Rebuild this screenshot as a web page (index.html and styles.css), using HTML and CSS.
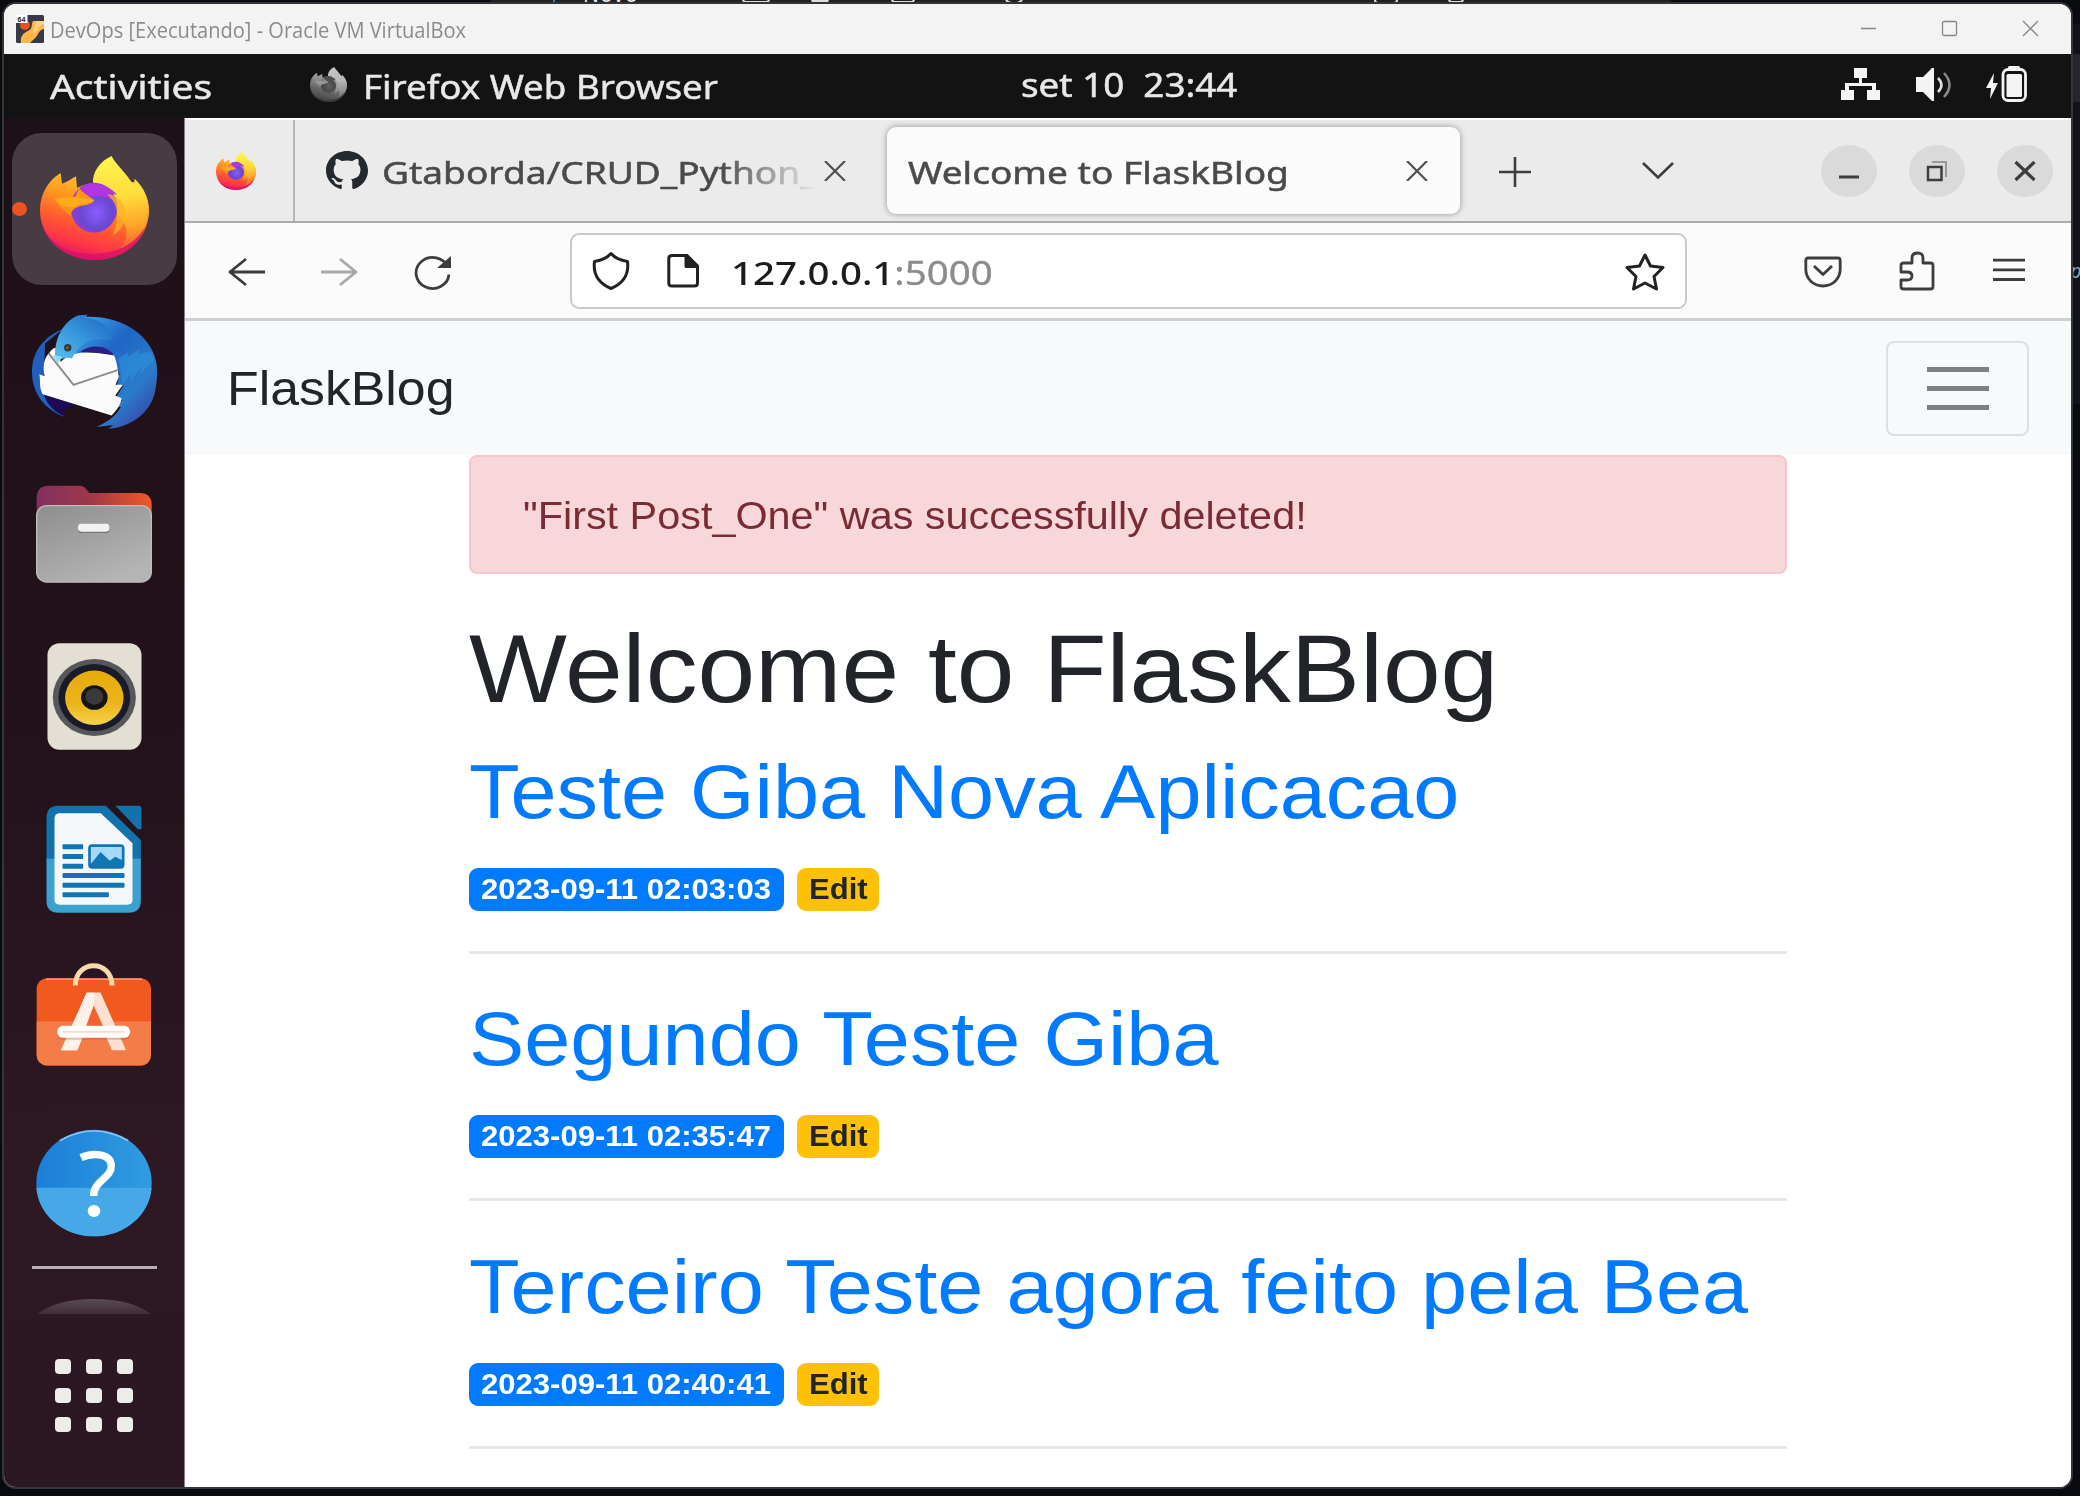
FILE: index.html
```html
<!DOCTYPE html>
<html lang="pt-BR">
<head>
<meta charset="utf-8">
<title>DevOps [Executando] - Oracle VM VirtualBox</title>
<link rel="stylesheet" href="styles.css">
</head>
<body>
<svg class="defs" width="0" height="0">
  <defs>
    <linearGradient id="fxBody" x1=".7" y1="0" x2=".35" y2="1"><stop offset="0" stop-color="#ffd738"/><stop offset=".35" stop-color="#ff9a1f"/><stop offset=".62" stop-color="#ff5a30"/><stop offset=".82" stop-color="#ff3647"/><stop offset="1" stop-color="#e0106f"/></linearGradient>
    <linearGradient id="fxFlame" x1=".4" y1="0" x2=".5" y2="1"><stop offset="0" stop-color="#fff44f"/><stop offset=".45" stop-color="#ffdc3a"/><stop offset=".8" stop-color="#ff9f28"/><stop offset="1" stop-color="#ff5f38"/></linearGradient>
    <radialGradient id="fxGlobe" cx=".55" cy=".6" r=".6"><stop offset="0" stop-color="#8a5cff"/><stop offset=".55" stop-color="#6a48d0"/><stop offset="1" stop-color="#9c35dc"/></radialGradient>
    <linearGradient id="tb" x1=".1" y1="0" x2=".9" y2="1"><stop offset="0" stop-color="#3fa4e6"/><stop offset=".35" stop-color="#1f66c6"/><stop offset=".7" stop-color="#2a7cca"/><stop offset="1" stop-color="#3d3aa0"/></linearGradient>
    <linearGradient id="tbHead" x1="0" y1="1" x2="1" y2="0"><stop offset="0" stop-color="#5cc0ee"/><stop offset=".5" stop-color="#3595da"/><stop offset="1" stop-color="#1f62c4"/></linearGradient>
    <linearGradient id="folder"><stop offset="0" stop-color="#83305f"/><stop offset=".45" stop-color="#9d374a"/><stop offset="1" stop-color="#ef5a24"/></linearGradient>
    <linearGradient id="drawer" x1="0" y1="0" x2=".6" y2="1"><stop offset="0" stop-color="#8e8e8e"/><stop offset="1" stop-color="#b4b4b4"/></linearGradient>
    <linearGradient id="cone" x1="0" y1="0" x2="0" y2="1"><stop offset="0" stop-color="#e6ac0c"/><stop offset=".6" stop-color="#eab41a"/><stop offset="1" stop-color="#f7d34c"/></linearGradient>
    <linearGradient id="help"><stop offset="0" stop-color="#1c7fd8"/><stop offset="1" stop-color="#2f9ce0"/></linearGradient>
    <linearGradient id="arc" x1="0" y1="0" x2="0" y2="1"><stop offset="0" stop-color="#5a4a53"/><stop offset="1" stop-color="#3e2d36"/></linearGradient>
    <symbol id="firefox" viewBox="120 137 327 312" preserveAspectRatio="none">
      <path fill="url(#fxBody)" d="M182 188L186 220C200 216 214 206 228 198L231 232C250 226 265 218 285 218L400 215C432 235 447 265 447 300C447 385 375 449 283 449C190 449 120 380 120 300C120 250 145 210 182 188Z"/>
      <path fill="url(#fxFlame)" d="M335 137C345 160 378 186 402 226L404 205C432 232 447 262 446 305C440 360 410 400 360 415C390 385 385 345 352 310C345 270 320 240 279 222C276 185 300 152 335 137Z"/>
      <path fill="#d90f6c" opacity=".75" d="M128 350C165 420 230 432 285 430C350 428 400 405 436 350C415 415 355 449 283 449C210 449 150 410 128 350Z"/>
      <ellipse cx="282" cy="292" rx="70" ry="75" fill="url(#fxGlobe)"/>
      <path fill="#b235e2" d="M245 230C275 212 325 220 352 254C335 246 325 250 322 252C330 258 335 264 338 270C310 250 280 262 250 258Z"/>
      <path fill="#ff9416" d="M163 266C190 260 210 264 226 258L238 232C252 254 278 262 283 270C275 286 245 284 228 292C215 300 212 308 213 320C196 300 175 288 163 266Z"/>
      <path fill="#ffae1c" opacity=".9" d="M163 266C190 258 240 262 283 270C265 282 240 280 222 290C200 292 180 285 163 266Z"/>
      <path fill="#ffb324" opacity=".75" d="M322 252C350 250 378 280 376 315C374 345 360 362 338 376C352 345 360 300 338 270Z"/>
    </symbol>
  </defs>
</svg>

<div class="behind"><i class="line"></i><span class="novo">Novo</span><i class="g1"></i><i class="g2"></i><i class="g3"></i><i class="g4"></i><i class="g5"></i><i class="g6"></i></div>
<div class="behind-right"><i></i><span>p</span></div>

<div class="window">
  <header class="titlebar">
    <svg class="vb-icon" viewBox="0 0 28 28"><rect width="28" height="28" rx="1.500" fill="#343a48"/><path fill="#ffb547" d="M17 6H28V14C22 15 23 20 19 23L14 28H5C4 22 7 18 12 16C17 14 15 9 17 6Z"/><path fill="#ffd28a" d="M20 6H28V9C20 11 22 17 18 19C16 16 20 12 20 6Z"/><circle cx="9" cy="10" r="5" fill="#e8501c"/><rect width="11.500" height="8" fill="#fff"/><text x="1.500" y="7" class="vb-bits">64</text></svg>
    <div class="win-title"><span class="fit">DevOps [Executando] - Oracle VM VirtualBox</span></div>
    <svg class="win-controls" viewBox="0 0 180 22" fill="none" stroke="#858585" stroke-width="1.300"><path d="M1 11.500H16"/><rect x="82.500" y="4.500" width="14" height="14" rx="1.500"/><path d="M163 4L178 19M178 4L163 19"/></svg>
  </header>

  <div class="panel">
    <div class="activities"><span class="fit">Activities</span></div>
    <svg class="panel-fx"><use href="#firefox"/></svg>
    <div class="appname"><span class="fit">Firefox Web Browser</span></div>
    <div class="clock"><span class="fit">set 10&nbsp; 23:44</span></div>
    <svg class="tray" viewBox="1840 64 190 40" fill="#f4f4f4">
      <path d="M1854 68h13v10h-5v5h14v7h4v10h-13v-10h5v-4h-23v4h5v10h-13v-10h4v-7h14v-5h-5z"/>
      <path d="M1916 77h7l9-9h2v33h-2l-9-9h-7z"/>
      <path d="M1938 78q7 7 0 14" fill="none" stroke="#e0e0e0" stroke-width="2.500"/><path d="M1944 73q11 12 0 24" fill="none" stroke="#8a8a8a" stroke-width="2.500"/>
      <path d="M1994 73L1986 88H1991L1990 99L1998 83H1993Z"/>
      <rect x="2003" y="69.500" width="22.500" height="31" rx="5" fill="none" stroke="#f4f4f4" stroke-width="2.800"/><rect x="2008" y="66" width="12" height="4" rx="1.500"/><rect x="2006.500" y="74" width="15.500" height="23" rx="1.500"/>
    </svg>
  </div>

  <div class="desktop">
    <nav class="dock">
      <div class="tile active"><i class="running"></i><svg class="ic-fx"><use href="#firefox"/></svg></div>
      <svg class="ic-tb" viewBox="96 612 374 344">
        <path fill="#1f5fbe" d="M190 655C130 680 96 725 96 785C96 850 135 900 195 920C160 890 140 870 130 850L135 700Z"/>
        <path fill="#1c0a52" d="M130 845L240 880C200 890 185 900 195 918C160 905 135 875 130 845Z"/>
        <path fill="url(#tb)" d="M240 622C330 612 420 650 455 720C475 760 473 800 465 840C455 900 400 950 325 955L340 944L288 950C320 935 345 920 362 890L350 890L366 870L348 860L370 825L350 825L358 790C345 770 350 755 342 738C300 715 250 720 215 745Z"/>
        <path fill="#2a1e86" d="M240 726C270 700 325 705 342 738C310 728 270 726 240 726Z"/>
        <path fill="#fbfbfb" d="M148 728C160 712 170 706 175 730L182 755C215 722 260 722 342 736C350 755 352 775 356 800L346 824L368 824L345 856L364 864C362 885 345 905 334 916L128 852C116 830 122 812 118 792L134 798C126 765 135 740 148 728Z"/>
        <path fill="none" stroke="#8d8d8d" stroke-width="6" d="M146 730L220 824L352 780"/>
        <path fill="url(#tbHead)" d="M166 744C160 690 190 632 235 616L262 614L256 624C300 626 330 650 335 690C280 680 245 690 215 745C200 740 185 745 172 754Z"/>
        <path fill="#8edcf0" d="M158 736L186 738C182 746 178 752 173 760Z"/>
        <circle cx="203" cy="713" r="11" fill="#33383a"/><circle cx="202" cy="713" r="4" fill="#8a6a2c"/>
        <path fill="#2f96dc" opacity=".55" d="M356 744L384 726L382 740L420 716L415 730L452 725L462 750L420 790L424 770L390 815L392 790L366 824Z"/>
      </svg>
      <svg class="ic-files" viewBox="110 104 348 294">
        <path fill="url(#folder)" d="M112 200V140Q114 106 148 106H240Q254 106 262 118L270 128H425Q457 130 457 162V220H112Z"/>
        <rect x="112" y="166" width="344" height="229" rx="30" fill="url(#drawer)" stroke="#bdbdbd" stroke-width="4"/>
        <rect x="236" y="224" width="94" height="24" rx="10" fill="#777"/><rect x="236" y="220" width="94" height="24" rx="10" fill="#f2f2f2"/>
      </svg>
      <svg class="ic-music" viewBox="141 577 285 322">
        <rect x="142" y="578" width="283" height="320" rx="36" fill="#e3dfd4"/><ellipse cx="283" cy="741" rx="125" ry="116" fill="#55575a"/><ellipse cx="283" cy="741" rx="108" ry="101" fill="#1b1a28"/><ellipse cx="283" cy="742" rx="88" ry="82" fill="url(#cone)"/><ellipse cx="283" cy="741" rx="40" ry="37" fill="#141414"/><ellipse cx="283" cy="738" rx="27" ry="25" fill="#3a3a3a"/>
      </svg>
      <svg class="ic-writer" viewBox="141 73 287 324">
        <path fill="#1272ab" d="M178 75H320L425 178V236H142V112Q142 75 178 75Z"/><path fill="#3ba2cf" d="M142 234H425V360Q425 396 388 396H178Q142 396 142 360Z"/>
        <path fill="#1272ab" d="M349 75H420Q427 76 427 84V146H416Z"/>
        <path fill="#f6f7f8" d="M182 98H305L400 188V358Q400 372 384 372H182Q166 372 166 358V114Q166 98 182 98Z"/>
        <g fill="#0f76b6"><rect x="190" y="191" width="62" height="15" rx="3"/><rect x="190" y="220" width="62" height="15" rx="3"/><rect x="190" y="249" width="62" height="15" rx="3"/><rect x="190" y="277" width="186" height="15" rx="3"/><rect x="190" y="306" width="186" height="15" rx="3"/><rect x="190" y="335" width="139" height="15" rx="3"/><rect x="267" y="191" width="109" height="73" rx="12"/></g>
        <path fill="#a6d8fb" d="M275 199H368V238L348 228L332 240L304 214L275 250Z"/>
      </svg>
      <svg class="ic-store" viewBox="110 547 348 308">
        <rect x="112" y="592" width="343" height="262" rx="32" fill="#f2591f"/><path fill="#f47c48" d="M112 722H455V822Q453 854 423 854H144Q112 852 112 822Z"/><path d="M140 595H428" stroke="#f98f68" stroke-width="5"/>
        <path fill="none" stroke="#f8d9a8" stroke-width="15" d="M228 614C228 535 338 535 338 614"/>
        <path fill="#fff1e8" d="M262 636H304L234 808H185Z"/><path fill="#fde0d2" d="M262 636H304L380 808H338Z"/><path fill="#f2622a" d="M283 674L312 738H252Z"/><path fill="#fff1e8" d="M262 636H286L283 674L234 808H185Z"/><rect x="174" y="740" width="218" height="37" rx="17" fill="#c9512c" opacity=".35"/><rect x="174" y="735" width="218" height="36" rx="17" fill="#fff"/><path d="M190 753H376" stroke="#fbd9cc" stroke-width="5"/>
      </svg>
      <svg class="ic-help" viewBox="109 57 348 324">
        <ellipse cx="283" cy="219" rx="173" ry="160" fill="url(#help)"/><path fill="#47a8e8" d="M110 233H456C450 315 375 379 283 379C191 379 116 315 110 233Z"/><path d="M180 92Q283 34 386 92" fill="none" stroke="#8cc6f2" stroke-width="5"/>
        <path d="M244 143C275 128 333 128 335 167C336 205 282 210 282 258" fill="none" stroke="#fff" stroke-width="22"/><ellipse cx="283" cy="303" rx="19" ry="18" fill="#fff"/>
      </svg>
      <i class="dock-line"></i>
      <svg class="ic-arc" viewBox="0 0 114 16"><path fill="url(#arc)" d="M0 16Q20 1 57 1T114 16Z"/></svg>
      <div class="apps"><i></i><i></i><i></i><i></i><i></i><i></i><i></i><i></i><i></i></div>
    </nav>

    <main class="browser">
      <div class="tabs">
        <div class="pinned"><svg class="tab-fx"><use href="#firefox"/></svg></div>
        <div class="tab">
          <svg class="gh" viewBox="0 0 16 16" preserveAspectRatio="none"><path fill="#24292f" d="M8 0C3.580 0 0 3.580 0 8c0 3.540 2.290 6.530 5.470 7.590.4.070.55-.17.55-.38 0-.19-.01-.82-.01-1.490-2.010.37-2.530-.49-2.690-.94-.09-.23-.48-.94-.82-1.130-.28-.15-.68-.52-.01-.53.63-.01 1.080.58 1.230.82.72 1.210 1.870.87 2.330.66.07-.52.28-.87.51-1.070-1.780-.2-3.640-.89-3.640-3.950 0-.87.31-1.590.82-2.150-.08-.2-.36-1.020.08-2.120 0 0 .67-.21 2.200.82.64-.18 1.320-.27 2-.27s1.360.09 2 .27c1.530-1.040 2.200-.82 2.200-.82.44 1.100.16 1.920.08 2.120.51.56.82 1.270.82 2.150 0 3.070-1.870 3.750-3.650 3.950.29.25.54.73.54 1.480 0 1.070-.01 1.930-.01 2.200 0 .21.15.46.55.38A8.010 8.010 0 0 0 16 8c0-4.420-3.580-8-8-8z"/></svg>
          <div class="tab-title fade"><span class="fit">Gtaborda/CRUD_Python_</span></div>
          <svg class="x" viewBox="0 0 22 20"><path d="M1 0L21 20M21 0L1 20"/></svg>
        </div>
        <div class="tab current">
          <div class="tab-title"><span class="fit">Welcome to FlaskBlog</span></div>
          <svg class="x" viewBox="0 0 22 20"><path d="M1 0L21 20M21 0L1 20"/></svg>
        </div>
        <svg class="plus" viewBox="0 0 32 30"><path d="M0 15H32M16 0V30"/></svg>
        <svg class="chev" viewBox="0 0 34 20"><path d="M2 2L17 16.500L32 2"/></svg>
        <div class="wm"><svg viewBox="0 0 56 52"><path d="M18 32H38" stroke="#3d3d3d" stroke-width="3"/></svg></div>
        <div class="wm"><svg viewBox="0 0 56 52" fill="none"><path d="M23 17H37V32" stroke="#999" stroke-width="2"/><rect x="19" y="22" width="13.500" height="13" stroke="#3d3d3d" stroke-width="2.500"/></svg></div>
        <div class="wm"><svg viewBox="0 0 56 52"><path d="M18.500 17L37.500 35M37.500 17L18.500 35" stroke="#3d3d3d" stroke-width="3.200"/></svg></div>
      </div>

      <div class="toolbar">
        <svg class="ico back" viewBox="0 0 37 30"><path d="M1 15H37M18 2L2 15L18 28"/></svg>
        <svg class="ico fwd" viewBox="0 0 37 30"><path d="M0 15H36M19 2L35 15L19 28"/></svg>
        <svg class="ico reload" viewBox="0 0 40 36"><path d="M35 12.500A16.500 15.500 0 1 0 36 19.500"/><path d="M38 1V13H24Z" fill="#3d3d3d" stroke="none"/></svg>
        <div class="urlbar">
          <svg class="ico shield" viewBox="0 0 40 40"><path d="M20 2.500C24 7 30 9.500 36.500 10.500C38 22 33 32 20 37.500C7 32 2 22 3.500 10.500C10 9.500 16 7 20 2.500Z"/></svg>
          <svg class="ico page" viewBox="0 0 32 34"><path d="M5 1.500H20L30.500 12V29Q30.500 32 27.500 32H5Q1.800 32 1.800 29V4.500Q1.800 1.500 5 1.500Z"/><path d="M19 1L31 12.500H19Z" fill="#222"/></svg>
          <div class="url"><span class="fit">127.0.0.1<em>:5000</em></span></div>
          <svg class="ico star" viewBox="0 0 42 40"><path d="M21 3L26.500 14L39 15.500L30 24.500L32.500 37L21 31L9.500 37L12 24.500L3 15.500L15.500 14Z"/></svg>
        </div>
        <svg class="ico pocket" viewBox="0 0 38 32"><path d="M4 2H34Q36.200 2 36.200 4.500V13C36.200 23 28.500 30 19 30S1.800 23 1.800 13V4.500Q1.800 2 4 2Z"/><path d="M10 10L19 18.500L28 10"/></svg>
        <svg class="ico puzzle" viewBox="0 0 36 40"><path d="M2 14V21H8Q13 21 13 25T8 29H2V35.500Q2 38 4.500 38H31.500Q34 38 34 35.500V14.500Q34 12 31.500 12H24V7Q24 2 18.500 2T13 7V12H4.500Q2 12 2 14Z"/></svg>
        <svg class="ico menu" viewBox="0 0 32 24"><path d="M0 2.200H32M0 11.800H32M0 21.500H32"/></svg>
      </div>

      <div class="page-body">
        <div class="navbar">
          <div class="brand"><span class="fit">FlaskBlog</span></div>
          <div class="toggler"><i></i><i></i><i></i></div>
        </div>
        <div class="container">
          <div class="alert"><span class="fit">"First Post_One" was successfully deleted!</span></div>
          <h1><span class="fit">Welcome to FlaskBlog</span></h1>
          <article><h2><span class="fit">Teste Giba Nova Aplicacao</span></h2><div class="meta"><div class="badge date"><span class="fit">2023-09-11 02:03:03</span></div><div class="badge edit"><span class="fit">Edit</span></div></div></article>
          <article><h2><span class="fit">Segundo Teste Giba</span></h2><div class="meta"><div class="badge date"><span class="fit">2023-09-11 02:35:47</span></div><div class="badge edit"><span class="fit">Edit</span></div></div></article>
          <article><h2><span class="fit">Terceiro Teste agora feito pela Bea</span></h2><div class="meta"><div class="badge date"><span class="fit">2023-09-11 02:40:41</span></div><div class="badge edit"><span class="fit">Edit</span></div></div></article>
        </div>
      </div>
    </main>
  </div>
</div>
</body>
</html>
```
FILE: styles.css
```css
* { box-sizing: border-box; }
body { margin: 0; width: 2080px; height: 1496px; overflow: hidden; position: relative; background: #090b10; font-family: "Noto Sans", sans-serif; }
svg { display: block; flex: none; }
.defs { position: absolute; }

.fit { display: inline-block; white-space: pre; transform-origin: 0 50%; transform: scaleX(1.082); }
.win-title .fit { transform: scaleX(.9555); }
.activities .fit { transform: scaleX(1.216); }
.appname .fit { transform: scaleX(1.147); }
.clock .fit { transform: scaleX(1.149); }
.tab-title .fit { transform: scaleX(1.195); }
.url .fit { transform: scaleX(1.2018); }
.alert .fit { transform: scaleX(1.0725); }
.panel .fit, .tab-title .fit { -webkit-text-stroke: .5px currentColor; }

/* slivers of the desktop windows behind the virtual machine */
.behind { position: absolute; left: 491px; top: 0; width: 1180px; height: 5px; background: #202020; overflow: hidden; }
.behind i { position: absolute; top: -12px; height: 15px; border: 2px solid #ddd; border-radius: 4px; }
.behind .line { left: 62px; width: 2px; border: 0; background: #2f86c0; border-radius: 0; }
.behind .g1 { left: 251px; width: 28px; }
.behind .g2 { left: 320px; width: 18px; background: #ddd; }
.behind .g3 { left: 400px; width: 24px; }
.behind .g4 { left: 513px; width: 20px; border-radius: 9px; height: 16px; }
.behind .g5 { left: 883px; width: 24px; height: 16px; }
.behind .g6 { left: 957px; width: 16px; }
.novo { position: absolute; left: 92px; top: -20px; color: #eee; font-size: 21px; line-height: 28px; letter-spacing: 1px; }
.behind-right { position: absolute; left: 2071px; top: 24px; width: 9px; height: 380px; background: #10131a; overflow: hidden; }
.behind-right i { position: absolute; left: 0; top: 30px; width: 9px; height: 48px; background: #232630; }
.behind-right span { position: absolute; left: -1px; top: 233px; color: #8ba3b5; font-size: 20px; font-style: italic; }

.window { position: absolute; left: 2px; top: 2px; width: 2071px; height: 1487px; border: 2px solid #333539; border-radius: 14px; overflow: hidden; background: #fff; display: flex; flex-direction: column; }

.titlebar { height: 50px; flex: none; background: #f3f3f3; display: flex; align-items: center; padding-left: 12px; }
.vb-icon { width: 28px; height: 28px; }
.vb-bits { font: bold 7px "Liberation Sans", sans-serif; fill: #222; }
.win-title { margin-left: 6px; width: 440px; font-size: 21px; line-height: 30px; padding-top: 1px; color: #8b8b8b; font-family: "Open Sans", sans-serif; }
.win-controls { width: 180px; height: 22px; margin-left: auto; margin-right: 31px; margin-top: -2px; }

.panel { height: 64px; flex: none; background: #131313; color: #e8e8e8; display: flex; align-items: center; font-size: 32px; line-height: 44px; }
.activities { margin-left: 46px; width: 260px; padding-top: 2px; }
.panel-fx { width: 37px; height: 35px; margin-top: -3px; filter: grayscale(1) brightness(.85); }
.appname { margin-left: 16px; width: 658px; padding-top: 2px; }
.clock { width: 300px; margin-top: -3px; }
.tray { width: 190px; height: 40px; margin-left: auto; margin-right: 41px; margin-top: -4px; }

.desktop { flex: 1; display: flex; min-height: 0; }

.dock { width: 181px; flex: none; display: flex; flex-direction: column; align-items: center; background: linear-gradient(178deg, #1e1018 0%, #23121b 45%, #2d1823 75%, #2b1721 100%); border-right: 1px solid #8b7f86; }
.dock svg { overflow: visible; }
.tile { width: 165px; height: 152px; margin-top: 15px; border-radius: 30px; background: #473c43; display: flex; align-items: center; }
.running { width: 15px; height: 14px; border-radius: 50%; background: #e95420; }
.ic-fx { width: 109px; height: 104px; margin-left: 13px; margin-top: -3px; }
.ic-tb { width: 125px; height: 115px; margin-top: 29px; }
.ic-files { width: 116px; height: 98px; margin-top: 56px; }
.ic-music { width: 95px; height: 107px; margin-top: 60px; }
.ic-writer { width: 96px; height: 108px; margin-top: 55px; }
.ic-store { width: 116px; height: 103px; margin-top: 50px; }
.ic-help { width: 116px; height: 108px; margin-top: 63px; }
.dock-line { width: 125px; height: 3px; margin-top: 29px; background: #b9aeb4; }
.ic-arc { width: 114px; height: 16px; margin-top: 29px; }
.apps { margin-top: 45px; display: grid; grid-template-columns: repeat(3, 16px); gap: 14px 15px; }
.apps i { height: 15px; border-radius: 4px; background: #eeecea; }

.browser { flex: 1; min-width: 0; display: flex; flex-direction: column; }

.tabs { height: 105px; flex: none; display: flex; align-items: center; background: #ebebeb; border-top: 2px solid #fbfbfb; border-bottom: 2px solid #ababab; font-size: 31px; line-height: 42px; color: #4a4a4a; }
.pinned { width: 110px; align-self: stretch; border-right: 2px solid #b5b5b5; display: flex; align-items: center; padding-left: 31px; }
.tab-fx { width: 40px; height: 38px; }
.tab { width: 573px; height: 87px; display: flex; align-items: center; }
.tab:not(.current) { padding-left: 31px; width: 592px; }
.gh { width: 42px; height: 39px; }
.tab-title { margin-left: 14px; width: 434px; padding-top: 2px; overflow: hidden; }
.fade { -webkit-mask-image: linear-gradient(90deg, #000 78%, transparent 100%); mask-image: linear-gradient(90deg, #000 78%, transparent 100%); }
.x { width: 22px; height: 20px; margin-left: 8px; stroke: #505050; stroke-width: 2.2; }
.current { background: #fbfbfb; border-radius: 9px; box-shadow: 0 0 6px rgba(0, 0, 0, .38); }
.current .tab-title { margin-left: 21px; width: 400px; }
.current .x { margin-left: 98px; }
.plus, .chev { fill: none; stroke: #3d3d3d; stroke-width: 2.6; }
.plus { width: 32px; height: 30px; margin-left: 39px; margin-top: 2px; }
.chev { width: 34px; height: 20px; margin-left: 110px; }
.wm { width: 56px; height: 52px; border-radius: 50%; background: #dadada; margin-left: 32px; }
.chev + .wm { margin-left: 146px; }

.toolbar { height: 98px; flex: none; background: #fbfbfb; border-bottom: 3px solid #cfd0d1; display: flex; align-items: center; }
.ico { fill: none; stroke: #3d3d3d; stroke-width: 2.8; stroke-linejoin: round; }
.back { width: 37px; height: 30px; margin-left: 43px; margin-top: 3px; }
.fwd { width: 37px; height: 30px; margin-left: 56px; margin-top: 3px; stroke: #a8a8a8; }
.reload { width: 40px; height: 36px; margin-left: 55px; margin-top: 4px; }
.urlbar { width: 1117px; height: 76px; margin-left: 117px; margin-top: 1px; border: 2px solid #c9c9c9; border-radius: 9px; background: #fff; display: flex; align-items: center; }
.urlbar .ico { stroke: #222; stroke-width: 3; }
.shield { width: 40px; height: 40px; margin-left: 19px; }
.page { width: 32px; height: 34px; margin-left: 36px; }
.url { margin-left: 32px; width: 300px; padding-top: 3px; font-size: 32px; line-height: 44px; font-weight: 500; color: #1c1c1c; }
.url em { font-style: normal; font-weight: 400; color: #8c8c8c; -webkit-text-stroke: .4px currentColor; }
.star { width: 42px; height: 40px; margin-left: auto; margin-right: 19px; margin-top: 1px; }
.pocket { width: 38px; height: 32px; margin-left: 117px; margin-top: 2px; }
.puzzle { width: 36px; height: 40px; margin-left: 57px; margin-top: 1px; }
.menu { width: 32px; height: 24px; margin-left: 58px; margin-top: -1px; }

.page-body { flex: 1; min-height: 0; background: #fff; font-family: "Liberation Sans", sans-serif; color: #212529; }
.navbar { height: 134px; background: #f8f9fb; display: flex; align-items: center; justify-content: space-between; padding: 0 42px; }
.brand { font-size: 47.9px; line-height: 72px; padding-top: 1px; }
.toggler { width: 143px; height: 95px; border: 2px solid #dedfe1; border-radius: 8px; display: flex; flex-direction: column; align-items: center; justify-content: center; gap: 14px; }
.toggler i { width: 62px; height: 5px; background: #7f8081; }
.container { width: 1318px; margin-left: 284px; }
.alert { height: 119px; background: #f8d7da; border: 2px solid #f5c6cb; border-radius: 8px; color: #7a2b34; font-size: 38.6px; line-height: 57px; padding: 30px 52px; }
h1, h2 { font-weight: 400; margin: 0; line-height: 1.2; white-space: nowrap; }
h1 { font-size: 95.8px; height: 115px; margin-top: 38px; }
h2 { font-size: 76.6px; height: 92px; color: #007bff; }
article { height: 247.4px; padding-top: 19px; }
.meta { display: flex; gap: 13px; margin-top: 30px; padding-bottom: 40px; border-bottom: 3px solid #e6e6e6; }
.badge { height: 43px; border-radius: 9px; padding-left: 12px; font-size: 28.7px; font-weight: 700; line-height: 43px; }
.date { width: 315px; background: #007bff; color: #fff; }
.edit { width: 82px; background: #ffc107; color: #212529; }
```
